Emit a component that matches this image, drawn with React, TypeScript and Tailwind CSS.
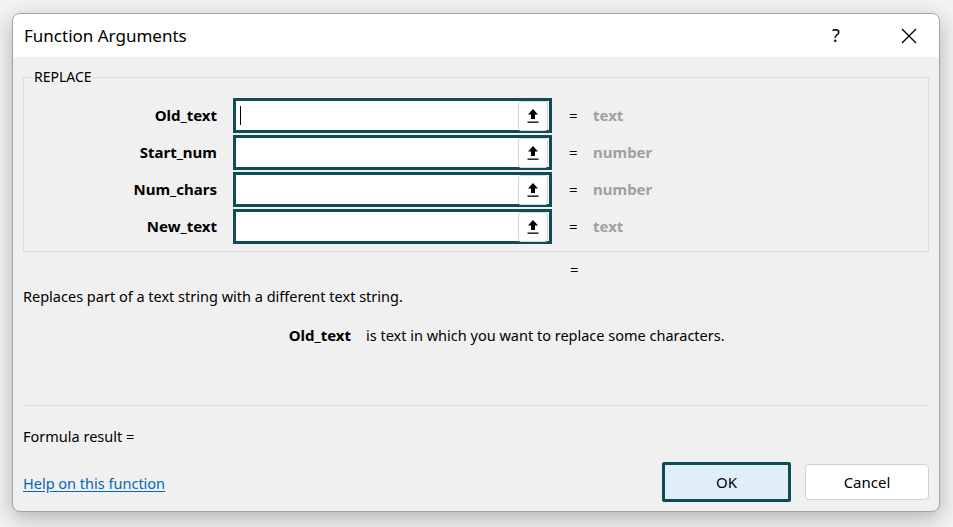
import React from "react";

const args = [
  { name: "Old_text", hint: "text", focused: true },
  { name: "Start_num", hint: "number" },
  { name: "Num_chars", hint: "number" },
  { name: "New_text", hint: "text" },
];

function PickIcon() {
  return (
    <svg width="12" height="16" viewBox="0 0 12 16" fill="none">
      <path d="M6 1 L11 6.5 H8 V11 H4 V6.5 H1 Z" fill="#000" />
      <rect x="0.5" y="13.5" width="11" height="1.3" fill="#000" />
    </svg>
  );
}

function ArgRow({ name, hint, focused }: { name: string; hint: string; focused?: boolean }) {
  return (
    <div className="flex items-center h-[35px]">
      <div className="w-[194px] text-right font-bold text-[15px] pr-px">{name}</div>
      <div className="ml-[15px] w-[319px] h-[35px] border-[3px] border-[#0f4c55] bg-white flex items-center justify-between">
        <div className="pl-[4px] flex items-center">
          {focused && <div className="w-px h-[19px] bg-black" />}
        </div>
        <div className="w-[30px] h-[30px] mr-px border border-[#d6d6d6] rounded-[3px] bg-white flex items-center justify-center">
          <PickIcon />
        </div>
      </div>
      <div className="ml-[17px] w-[20px] text-[15px]">=</div>
      <div className="ml-[4px] text-[15px] font-bold text-[#a0a0a0]">{hint}</div>
    </div>
  );
}

export default function App() {
  return (
    <div
      className="w-[953px] h-[527px] bg-[#f3f3f3] pt-[13px] pl-[12px] text-black"
      style={{ fontFamily: '"Noto Sans", "Open Sans", sans-serif' }}
    >
      <div className="w-[928px] h-[499px] rounded-lg border border-[#a3a3a3] overflow-hidden flex flex-col bg-[#f0f0f0] shadow-[0_6px_22px_rgba(0,0,0,0.28)]">
        <div className="h-[43px] bg-white flex items-center pl-[11px] pr-[22px] shrink-0">
          <div className="text-[17px] flex-1">Function Arguments</div>
          <div className="text-[18px] w-[12px] text-center mr-[59px]">?</div>
          <svg width="16" height="16" viewBox="0 0 16 16">
            <path d="M1 1 L15 15 M15 1 L1 15" stroke="#000" strokeWidth="1.4" />
          </svg>
        </div>

        <div className="flex-1 px-[10px] flex flex-col">
          <fieldset className="mt-[11px] h-[184px] border border-[#dcdcdc] px-0 pb-[5px]">
            <legend className="ml-[9px] px-px text-[14px] leading-[18px]">REPLACE</legend>
            <div className="flex flex-col gap-[2px] mt-[12px]">
              {args.map((a) => (
                <ArgRow key={a.name} {...a} />
              ))}
            </div>
          </fieldset>

          <div className="h-[26px] flex items-center pl-[547px] text-[15px] mt-[4px]">=</div>

          <div className="text-[14.5px] mt-[3px] h-[22px] leading-[22px]">
            Replaces part of a text string with a different text string.
          </div>

          <div className="flex text-[14.5px] mt-[17px] h-[22px] leading-[22px]">
            <div className="w-[328px] text-right font-bold text-[15px]">Old_text</div>
            <div className="ml-[15px]">is text in which you want to replace some characters.</div>
          </div>

          <div className="mt-[59px] h-px bg-[#dcdcdc] mr-[1px]" />

          <div className="text-[14.5px] mt-[19px] h-[22px] leading-[22px]">Formula result =</div>

          <div className="flex items-start justify-between mt-[15px]">
            <a href="#" className="text-[14.5px] leading-[21px] text-[#0067c0] underline underline-offset-2 mt-[11px]">
              Help on this function
            </a>
            <div className="flex items-center gap-[14px]">
              <button className="w-[129px] h-[40px] bg-[#e0eef9] border-[3px] border-[#0f4c55] rounded-[2px] text-[15px]">
                OK
              </button>
              <button className="w-[124px] h-[36px] bg-white border border-[#d0d0d0] rounded-[4px] text-[15px]">
                Cancel
              </button>
            </div>
          </div>
        </div>
      </div>
    </div>
  );
}
